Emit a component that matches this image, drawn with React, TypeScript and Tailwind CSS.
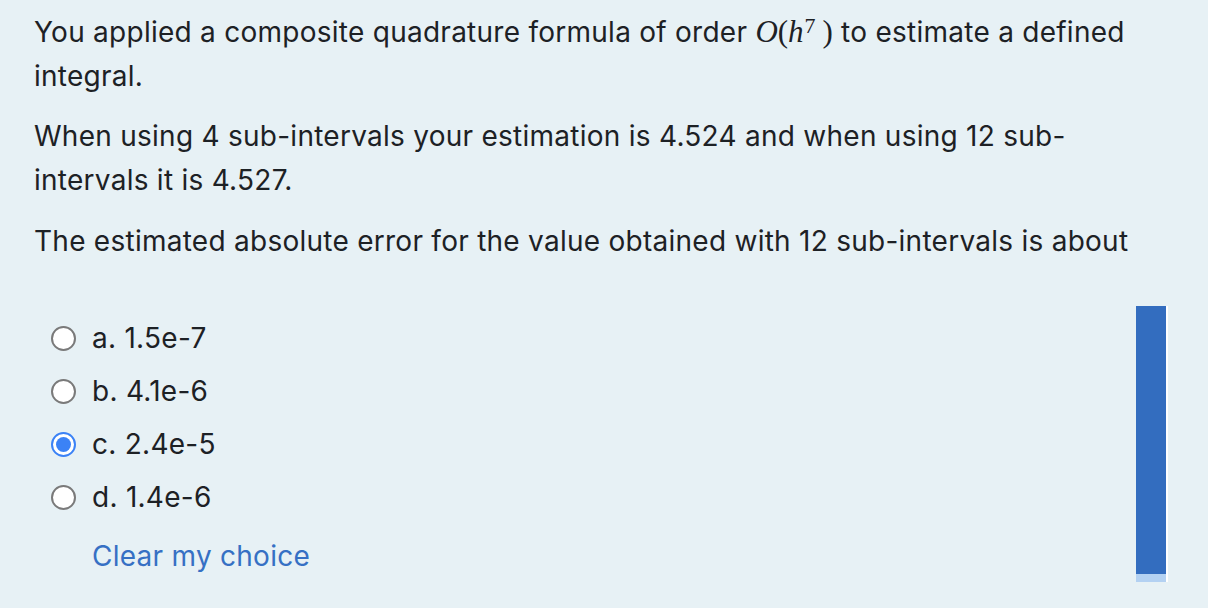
import React from "react";

function Radio({ checked }: { checked?: boolean }) {
  return checked ? (
    <span className="flex h-[25px] w-[25px] items-center justify-center rounded-full border-[2px] border-[#3b82f6] bg-white">
      <span className="h-[15px] w-[15px] rounded-full bg-[#3b82f6]" />
    </span>
  ) : (
    <span className="h-[25px] w-[25px] rounded-full border-[2px] border-[#7a7a7a] bg-white" />
  );
}

const serif = { fontFamily: "'Liberation Serif', serif" };

export default function App() {
  const opts = [
    { l: "a.", v: "1.5e-7" },
    { l: "b.", v: "4.1e-6" },
    { l: "c.", v: "2.4e-5", c: true },
    { l: "d.", v: "1.4e-6" },
  ];
  return (
    <div
      className="relative flex h-[608px] w-[1208px] bg-[#e7f1f5] text-[#1d2125]"
      style={{ fontFamily: "Inter, 'Noto Sans', sans-serif" }}
    >
      <div className="flex w-[1150px] flex-col pl-[34px] pt-[10px] text-[28px] leading-[44px] tracking-[0.26px]">
        <p>
          You applied a composite quadrature formula of order{" "}
          <span className="text-[31px] leading-[30px] tracking-normal" style={serif}>
            <i>O</i>(<i>h</i>
            <sup className="top-[-9px] ml-[1px] mr-[7px] align-baseline text-[22px]">7</sup>)
          </span>{" "}
          to estimate a defined integral.
        </p>
        <p className="mt-[16px]">
          When using 4 sub-intervals your estimation is 4.524 and when using 12 sub-intervals it is 4.527.
        </p>
        <p className="mt-[17px]">
          The estimated absolute error for the value obtained with 12 sub-intervals is about
        </p>
        <div className="mt-[53px] flex flex-col gap-[8px] pl-[17px] leading-[45px]">
          {opts.map((o) => (
            <div key={o.l} className="flex items-center gap-[16px]">
              <Radio checked={o.c} />
              <span>
                {o.l} {o.v}
              </span>
            </div>
          ))}
          <div className="mt-[6px] pl-[41px] text-[#3670c4]">Clear my choice</div>
        </div>
      </div>
      <div className="absolute left-[1136px] top-[306px] flex h-[276px] w-[32px] flex-col border-r-[2px] border-white">
        <div className="flex-1 bg-[#336dbf]" />
        <div className="h-[8px] bg-[#b3d1f2]" />
      </div>
    </div>
  );
}
